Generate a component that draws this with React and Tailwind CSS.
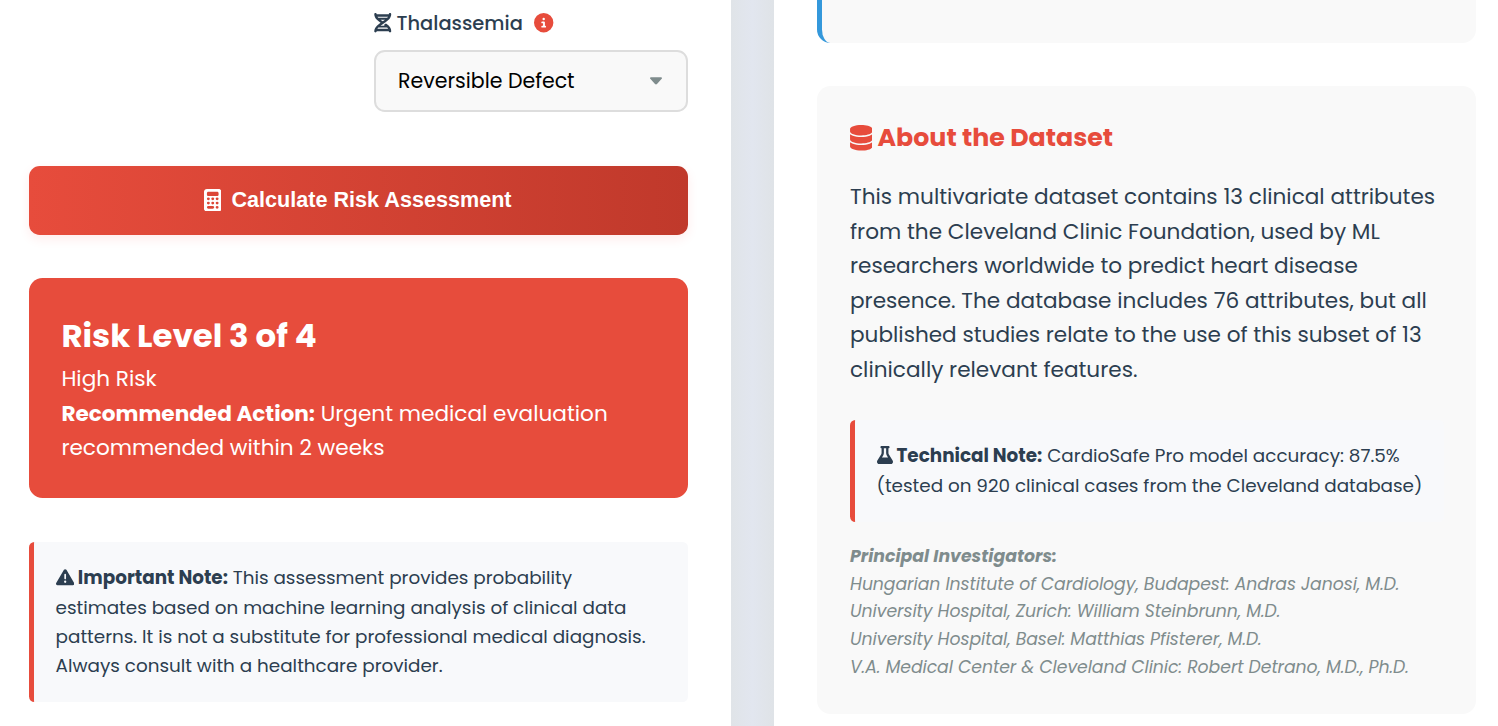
import React from 'react';
import {
  FaDna,
  FaCircleInfo,
  FaCalculator,
  FaTriangleExclamation,
  FaFlask,
  FaDatabase,
} from 'react-icons/fa6';

function ThalassemiaField() {
  return (
    <div className="ml-[345px] flex flex-col">
      <label className="flex h-[31px] items-center text-[19.44px] font-medium text-[#2c3e50]">
        <FaDna className="mb-px h-[19.4px] w-[17.5px] shrink-0" />
        <span className="ml-[5px]">Thalassemia</span>
        <FaCircleInfo className="mb-px ml-[11.5px] size-[19.4px] shrink-0 text-[#e74c3c]" />
      </label>
      <div className="mt-[11px] flex h-[62px] items-center justify-between rounded-[10.8px] border-2 border-[#dddddd] bg-[#f9f9f9] pr-[24px] pl-[22px]">
        <span className="text-[20.52px] text-black">Reversible Defect</span>
        <svg viewBox="0 0 12 8" className="h-[8px] w-[12px] text-[#7f8c8d]" fill="currentColor">
          <path d="M1 0.2h10c1 0 1.3 1 .7 1.6L7 7.1c-.6.6-1.4.6-2 0L.3 1.8C-.3 1.2 0 .2 1 .2Z" />
        </svg>
      </div>
    </div>
  );
}

function RiskResult() {
  return (
    <section className="mt-[43px] h-[220px] rounded-[13.5px] bg-[#e74c3c] p-[32.4px] text-[21.6px] leading-[34.56px] text-white">
      <h2 className="text-[32.4px] leading-[51.84px] font-bold">Risk Level 3 of 4</h2>
      <p>High Risk</p>
      <p>
        <strong className="font-bold">Recommended Action:</strong> Urgent medical evaluation
        recommended within 2 weeks
      </p>
    </section>
  );
}

function ImportantNote() {
  return (
    <aside className="mt-[44px] h-[160px] rounded-[5.4px] border-l-[5px] border-[#e74c3c] bg-[#f8f9fb] px-[21.6px] py-[21.2px] text-[18.36px] leading-[29.38px] text-[#2c3e50]">
      <FaTriangleExclamation className="-mr-px inline size-[18.36px] align-[-2.3px]" />{' '}
      <strong className="font-bold">Important Note:</strong> This assessment provides probability
      estimates based on machine learning analysis of clinical data patterns. It is not a substitute
      for professional medical diagnosis. Always consult with a healthcare provider.
    </aside>
  );
}

function DatasetCard() {
  return (
    <section className="mt-[43px] h-[628px] rounded-[13.5px] bg-[#f9f9f9] pt-[32px] pr-[32.4px] pl-[33px] text-[#2c3e50]">
      <h3 className="flex h-[40.4px] items-center text-[25.27px] font-bold whitespace-nowrap text-[#e74c3c]">
        <FaDatabase className="-ml-[0.5px] h-[25.6px] w-[22.5px] shrink-0" />
        <span className="ml-[5.5px]">About the Dataset</span>
      </h3>
      <p className="mt-[21.7px] text-[21.6px] leading-[34.56px]">
        This multivariate dataset contains 13 clinical attributes from the Cleveland Clinic
        Foundation, used by ML researchers worldwide to predict heart disease presence. The database
        includes 76 attributes, but all published studies relate to the use of this subset of 13
        clinically relevant features.
      </p>
      <aside className="mt-[32.5px] h-[102px] rounded-[5.4px] border-l-[5px] border-[#e74c3c] bg-[#f8f9fb] py-[21.5px] pr-[20px] pl-[21.6px] text-[18.36px] leading-[29.38px]">
        <FaFlask className="-mr-px inline h-[18.36px] w-[16px] align-[-1.8px]" />{' '}
        <strong className="font-bold">Technical Note:</strong> CardioSafe Pro model accuracy: 87.5%
        (tested on 920 clinical cases from the Cleveland database)
      </aside>
      <div className="mt-[21px] text-[17.28px] leading-[27.65px] whitespace-nowrap text-[#7f8c8d] italic">
        <p className="font-bold tracking-[0.03px]">Principal Investigators:</p>
        <div className="tracking-[-0.055px]">
          <p>Hungarian Institute of Cardiology, Budapest: Andras Janosi, M.D.</p>
          <p>University Hospital, Zurich: William Steinbrunn, M.D.</p>
          <p>University Hospital, Basel: Matthias Pfisterer, M.D.</p>
          <p>V.A. Medical Center &amp; Cleveland Clinic: Robert Detrano, M.D., Ph.D.</p>
        </div>
      </div>
    </section>
  );
}

export default function App() {
  return (
    <div className="flex h-[726px] w-[1498px] overflow-hidden bg-white font-['Poppins','Inter',sans-serif]">
      <main className="w-[731px] shrink-0 bg-white pt-[8px] pr-[43px] pl-[29px]">
        <ThalassemiaField />
        <button className="mt-[54px] flex h-[69px] w-full items-center justify-center rounded-[10.8px] bg-linear-to-r from-[#e74c3c] to-[#c0392b] pr-[1.5px] pb-[1px] font-['Liberation_Sans',sans-serif] text-[21.6px] font-bold text-white shadow-[0_4px_12px_rgba(255,0,0,0.08)]">
          <FaCalculator
            preserveAspectRatio="none"
            className="mr-[10px] h-[22.5px] w-[17.5px] shrink-0"
          />
          Calculate Risk Assessment
        </button>
        <RiskResult />
        <ImportantNote />
      </main>
      <div className="w-[43px] shrink-0 bg-linear-to-r from-[#e0e4e8] via-[#e2e6ef] to-[#dfe3e7]" />
      <main className="min-w-0 flex-1 bg-white pr-[22px] pl-[43px]">
        <div className="h-[43px] rounded-b-[13.5px] border-l-[5px] border-[#3498db] bg-[#f9f9f9]" />
        <DatasetCard />
      </main>
    </div>
  );
}
